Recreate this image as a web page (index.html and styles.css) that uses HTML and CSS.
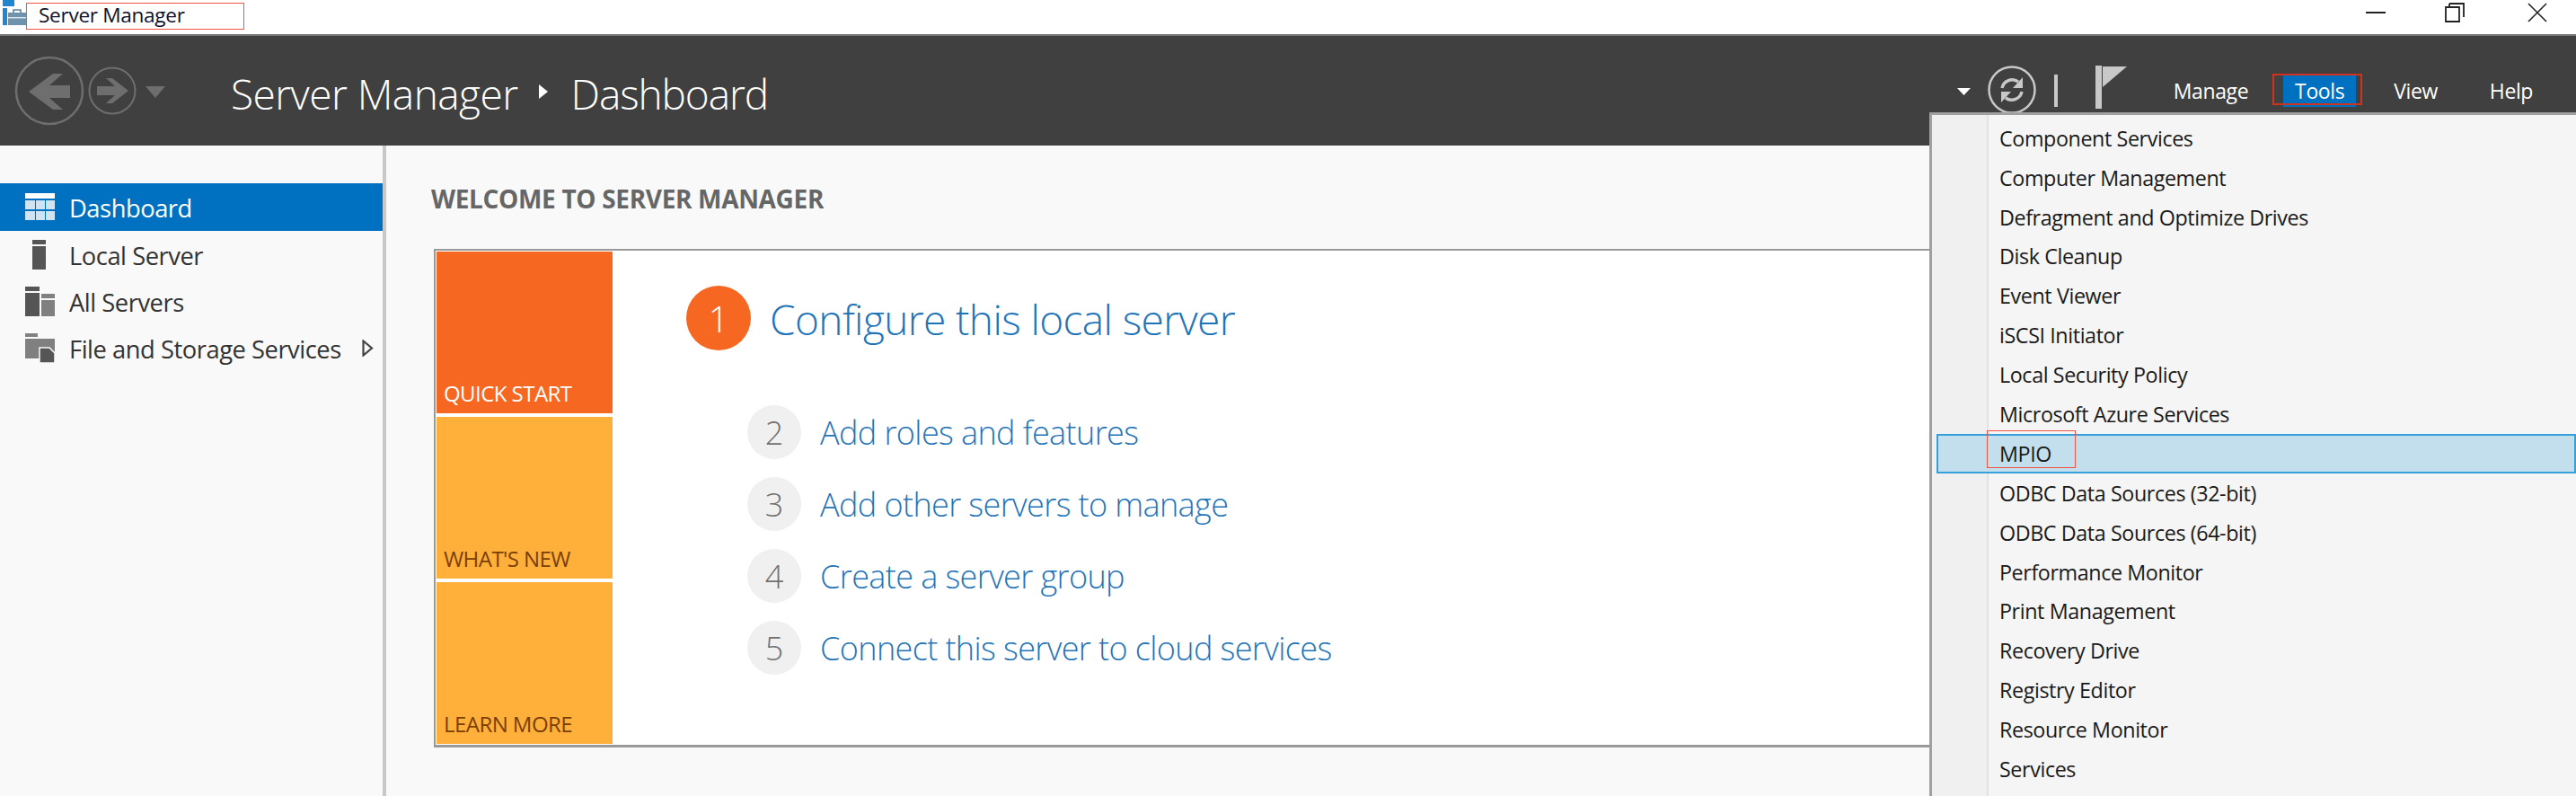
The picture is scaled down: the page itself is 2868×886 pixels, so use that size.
FILE: index.html
```html
<!DOCTYPE html>
<html lang="en">
<head>
<meta charset="utf-8">
<title>Server Manager</title>
<link rel="stylesheet" href="styles.css">
</head>
<body>
<div class="app">
  <div class="titlebar">
    <svg class="app-icon" width="30" height="30" viewBox="0 0 30 30">
      <rect x="3" y="0" width="13" height="7" fill="#1f86d0"/>
      <rect x="3" y="9" width="5" height="19" fill="#1f86d0"/>
      <path d="M15 14v-3h8v3" fill="none" stroke="#5f8199" stroke-width="1.6"/>
      <rect x="9" y="14" width="20" height="14" fill="#6f93ad"/>
      <rect x="9" y="19" width="20" height="1.4" fill="#dfe8ef"/>
    </svg>
    <div class="title-name">Server Manager</div>
    <div class="win-controls">
      <svg class="win-min" width="22" height="4" viewBox="0 0 22 4"><rect width="22" height="2" y="1" fill="#222"/></svg>
      <svg class="win-restore" width="22" height="22" viewBox="0 0 22 22"><path d="M5 1h16v15M1 5h15v16H1z" fill="none" stroke="#222" stroke-width="1.8"/><path d="M5 5V1" stroke="#222" stroke-width="1.8"/></svg>
      <svg class="win-close" width="24" height="24" viewBox="0 0 24 24"><path d="M2 2l20 20M22 2L2 22" stroke="#222" stroke-width="1.6"/></svg>
    </div>
  </div>

  <header class="header">
    <svg class="nav-back" width="78" height="78" viewBox="0 0 78 78">
      <circle cx="39" cy="39" r="37" fill="none" stroke="#6e6e6e" stroke-width="2.5"/>
      <path d="M16 40L43 20H54L39 33H62V47H39L54 60H43Z" fill="#6e6e6e"/>
    </svg>
    <svg class="nav-forward" width="54" height="54" viewBox="0 0 54 54">
      <circle cx="27" cy="27" r="25.5" fill="none" stroke="#6e6e6e" stroke-width="2"/>
      <path d="M45 27L27 41H20L30 32H10V22H30L20 13H27Z" fill="#6e6e6e"/>
    </svg>
    <svg class="nav-drop" width="22" height="13" viewBox="0 0 22 13"><path d="M0 0H22L11 13Z" fill="#6e6e6e"/></svg>
    <div class="crumb">Server Manager</div>
    <svg class="crumb-arrow" width="10" height="16" viewBox="0 0 10 16"><path d="M0 0L10 8L0 16Z" fill="#fff"/></svg>
    <div class="crumb crumb-page">Dashboard</div>

    <div class="tools">
      <svg class="tool-drop" width="15" height="8" viewBox="0 0 15 8"><path d="M0 0H15L7.5 8Z" fill="#fff"/></svg>
      <svg class="tool-refresh" width="56" height="56" viewBox="0 0 56 56">
        <circle cx="28" cy="28" r="25.5" fill="none" stroke="#c8c8c8" stroke-width="2.5"/>
        <g>
          <path d="M17 26A11.5 11.5 0 0 1 35 19" fill="none" stroke="#c8c8c8" stroke-width="3.5"/>
          <path d="M40 14V26H29Z" fill="#c8c8c8"/>
        </g>
        <g transform="rotate(180 28 28)">
          <path d="M17 26A11.5 11.5 0 0 1 35 19" fill="none" stroke="#c8c8c8" stroke-width="3.5"/>
          <path d="M40 14V26H29Z" fill="#c8c8c8"/>
        </g>
      </svg>
      <span class="tool-sep"></span>
      <svg class="tool-flag" width="36" height="48" viewBox="0 0 36 48">
        <rect x="0" y="0" width="7" height="48" fill="#c8c8c8"/>
        <path d="M8 1H35L8 24Z" fill="#c8c8c8"/>
      </svg>
      <nav class="menubar">
        <span class="menubar-item item-manage">Manage</span>
        <span class="menubar-item item-tools">Tools<span class="mark mark-tools"></span></span>
        <span class="menubar-item item-view">View</span>
        <span class="menubar-item item-help">Help</span>
      </nav>
    </div>
  </header>

  <div class="main">
    <aside class="sidebar">
      <div class="side-item active">
        <svg class="side-icon" width="33" height="33" viewBox="0 0 33 33">
          <rect x="0" y="1" width="33" height="6" fill="#fff"/>
          <g fill="#cfe3f2">
            <rect x="0" y="9" width="11" height="10"/><rect x="12" y="9" width="10" height="10"/><rect x="23" y="9" width="10" height="10"/>
            <rect x="0" y="21" width="11" height="10"/><rect x="12" y="21" width="10" height="10"/><rect x="23" y="21" width="10" height="10"/>
          </g>
        </svg>
        <span class="side-label">Dashboard</span>
      </div>
      <div class="side-item">
        <svg class="side-icon" width="33" height="33" viewBox="0 0 33 33">
          <rect x="8" y="0" width="15" height="5" fill="#555"/>
          <rect x="8" y="7" width="15" height="26" fill="#555"/>
        </svg>
        <span class="side-label">Local Server</span>
      </div>
      <div class="side-item">
        <svg class="side-icon" width="33" height="33" viewBox="0 0 33 33">
          <rect x="0" y="0" width="16" height="5" fill="#555"/>
          <rect x="0" y="7" width="16" height="26" fill="#555"/>
          <rect x="18" y="8" width="15" height="5" fill="#808080"/>
          <rect x="18" y="15" width="15" height="18" fill="#808080"/>
        </svg>
        <span class="side-label">All Servers</span>
      </div>
      <div class="side-item">
        <svg class="side-icon" width="33" height="33" viewBox="0 0 33 33">
          <rect x="0" y="0" width="14" height="4" fill="#808080"/>
          <rect x="0" y="6" width="33" height="22" fill="#808080"/>
          <path d="M16 16H27L33 22V33H16Z" fill="#555" stroke="#f9f9f9" stroke-width="1.5"/>
        </svg>
        <span class="side-label">File and Storage Services</span>
        <svg class="side-more" width="13" height="19" viewBox="0 0 13 19"><path d="M1.5 1.5L11 9.5L1.5 17.5Z" fill="none" stroke="#444" stroke-width="2.2"/></svg>
      </div>
    </aside>

    <section class="content">
      <h1 class="welcome">WELCOME TO SERVER MANAGER</h1>
      <div class="card">
        <div class="tiles">
          <div class="tile tile-quick">QUICK START</div>
          <div class="tile tile-amber">WHAT'S NEW</div>
          <div class="tile tile-amber">LEARN MORE</div>
        </div>
        <div class="steps">
          <div class="step-main">
            <span class="bullet bullet-main">1</span>
            <a class="step-link-main">Configure this local server</a>
          </div>
          <div class="step"><span class="bullet">2</span><a class="step-link">Add roles and features</a></div>
          <div class="step"><span class="bullet">3</span><a class="step-link">Add other servers to manage</a></div>
          <div class="step"><span class="bullet">4</span><a class="step-link">Create a server group</a></div>
          <div class="step"><span class="bullet">5</span><a class="step-link">Connect this server to cloud services</a></div>
        </div>
      </div>
    </section>
  </div>

  <div class="dropdown">
    <div class="dd-item">Component Services</div>
    <div class="dd-item">Computer Management</div>
    <div class="dd-item">Defragment and Optimize Drives</div>
    <div class="dd-item">Disk Cleanup</div>
    <div class="dd-item">Event Viewer</div>
    <div class="dd-item">iSCSI Initiator</div>
    <div class="dd-item">Local Security Policy</div>
    <div class="dd-item">Microsoft Azure Services</div>
    <div class="dd-item selected">MPIO<span class="mark mark-mpio"></span></div>
    <div class="dd-item">ODBC Data Sources (32-bit)</div>
    <div class="dd-item">ODBC Data Sources (64-bit)</div>
    <div class="dd-item">Performance Monitor</div>
    <div class="dd-item">Print Management</div>
    <div class="dd-item">Recovery Drive</div>
    <div class="dd-item">Registry Editor</div>
    <div class="dd-item">Resource Monitor</div>
    <div class="dd-item">Services</div>
  </div>
</div>
</body>
</html>
```

FILE: styles.css
```css
* { box-sizing: border-box; }
html, body { margin: 0; padding: 0; }
body { width: 2868px; height: 886px; overflow: hidden; background: #f9f9f9; font-family: "Open Sans", "Noto Sans", sans-serif; }
.app { position: relative; width: 2868px; height: 886px; display: flex; flex-direction: column; overflow: hidden; }

.titlebar { height: 38px; flex: none; background: #fff; display: flex; align-items: flex-start; }
.app-icon { flex: none; margin-right: -1px; }
.title-name { width: 243px; height: 30px; margin-top: 3px; padding-left: 13px; border: 1.5px solid #f0533f; font-size: 22.6px; line-height: 25px; letter-spacing: -.3px; color: #10102a; }
.win-controls { margin-left: auto; display: flex; align-items: center; height: 28px; }
.win-min { margin-right: 66px; }
.win-restore { margin-right: 69px; }
.win-close { margin-right: 31px; }

.header { height: 124px; flex: none; background: #404040; border-top: 2px solid #777; display: flex; align-items: center; padding-left: 16px; }
.nav-back { flex: none; }
.nav-forward { flex: none; margin-left: 4px; }
.nav-drop { flex: none; margin-left: 10px; margin-top: 2px; }
.crumb { flex: none; margin-left: 73px; margin-top: 6px; font-size: 46px; font-weight: 300; letter-spacing: -.55px; line-height: 56px; color: #fff; }
.crumb-arrow { flex: none; margin-left: 23px; margin-top: 2px; }
.crumb-page { margin-left: 26px; letter-spacing: -1.1px; }

.tools { margin-left: auto; display: flex; align-items: center; height: 100%; }
.tool-drop { flex: none; margin-top: 2px; }
.tool-refresh { flex: none; margin-left: 18px; margin-right: 19px; margin-top: -2px; }
.tool-sep { flex: none; width: 4px; height: 36px; background: #c8c8c8; }
.tool-flag { flex: none; margin-left: 42px; margin-top: -9px; }
.menubar { display: flex; align-items: center; margin-left: 51px; margin-right: 48px; margin-top: 1px; }
.menubar-item { position: relative; font-size: 23px; letter-spacing: -.4px; color: #fff; line-height: 35px; }
.item-tools { display: block; width: 81px; height: 35px; background: #0070c0; text-align: center; margin-left: 39px; }
.item-view { margin-left: 42px; }
.item-help { margin-left: 58px; }
.mark { position: absolute; border: 2px solid #d0321e; pointer-events: none; }
.mark-tools { left: -12px; top: -2px; width: 100px; height: 35px; }

.main { flex: 1; min-height: 0; display: flex; }
.sidebar { flex: none; width: 430px; border-right: 4px solid #c8c8c8; padding-top: 42px; background: #f9f9f9; }
.side-item { height: 52px; display: flex; align-items: center; padding-left: 28px; font-size: 27.3px; letter-spacing: -.45px; color: #333; white-space: nowrap; }
.side-label { padding-top: 2px; }
.side-item.active { height: 53px; background: #0070c0; color: #fff; }
.side-icon { flex: none; margin-right: 16px; }
.side-more { flex: none; margin-left: 23px; }

.content { flex: 1; min-width: 0; padding: 44px 0 0 50px; }
.welcome { margin: 0 0 41px; font-size: 28px; font-weight: 700; line-height: 30px; letter-spacing: -.33px; color: #666; }
.card { display: flex; height: 555px; margin-left: 3px; background: #fff; border: 1px solid #999; border-width: 2px 0 3px 2px; padding: 1px 0 0 1px; }
.tiles { flex: none; width: 196px; display: flex; flex-direction: column; gap: 4px; }
.tile { flex: none; height: 180px; padding: 0 0 7px 8px; display: flex; align-items: flex-end; font-size: 24px; letter-spacing: -.55px; line-height: 30px; }
.tile-quick { background: #f66721; color: #fff; }
.tile-amber { background: #ffb03b; color: #7a3f06; }
.steps { flex: 1; padding: 38px 0 0 82px; }
.step-main { display: flex; align-items: center; gap: 21px; height: 72px; margin-bottom: 61px; }
.bullet { flex: none; width: 60px; height: 60px; border-radius: 50%; background: #f0f0f0; color: #707070; display: flex; align-items: center; justify-content: center; font-size: 36px; font-weight: 300; }
.bullet-main { width: 72px; height: 72px; background: #f66721; color: #fff; font-size: 40px; }
.step-link-main { padding-top: 2px; font-size: 46px; font-weight: 300; letter-spacing: -.6px; color: #1f74b8; }
.step { display: flex; align-items: center; gap: 21px; height: 60px; margin: 0 0 20px 68px; }
.step-link { font-size: 36px; font-weight: 300; letter-spacing: -.6px; color: #1f74b8; }

.dropdown { position: absolute; left: 2148px; top: 125px; right: 0; bottom: 0; padding-top: 3.8px; border-left: 3px solid #a0a0a0; border-top: 3px solid #a0a0a0; background: linear-gradient(to right, #f0f0f0 61px, #e2e2e2 61px, #e2e2e2 63px, #f5f5f5 63px); }
.dd-item { position: relative; height: 43.9px; margin-left: 5px; padding-left: 68px; border: 2px solid transparent; display: flex; align-items: center; font-size: 23.3px; letter-spacing: -.4px; color: #1a1a1a; }
.dd-item.selected { background: #c3dfee; border-color: #36a0da; }
.mark-mpio { left: 54px; top: -6px; width: 99px; height: 42px; border: 1.5px solid #f0533f; }
```
